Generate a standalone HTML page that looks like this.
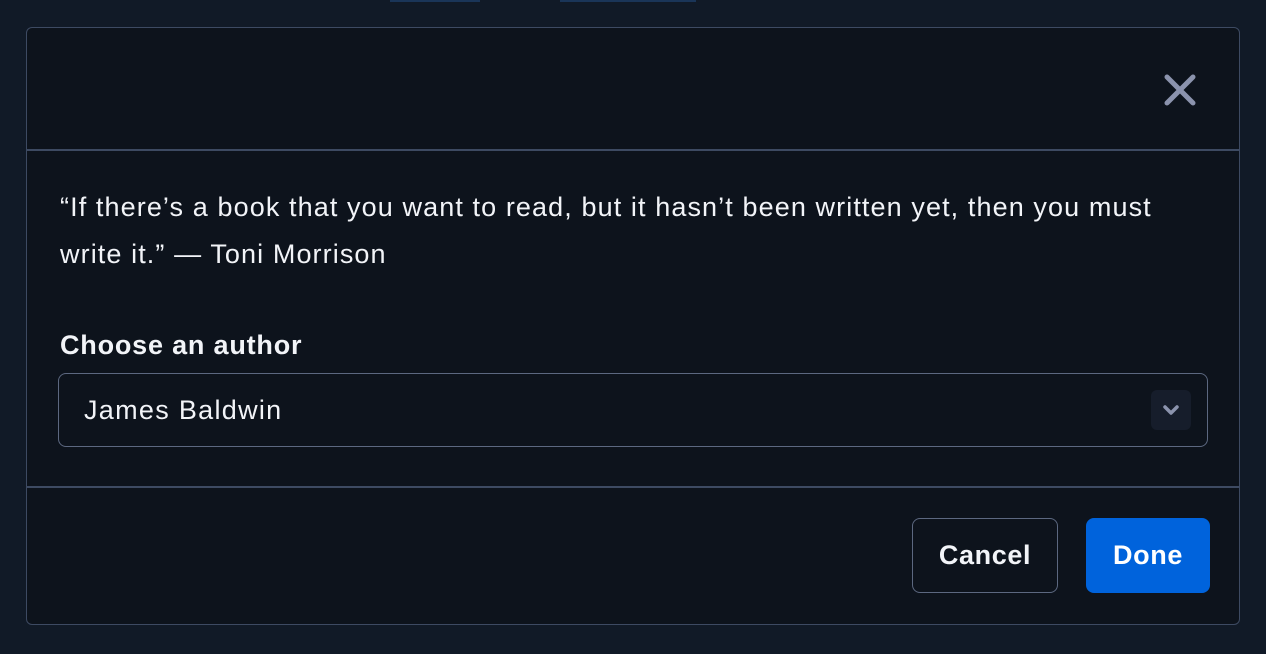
<!DOCTYPE html>
<html><head><style>
html,body{margin:0;padding:0;width:1266px;height:654px;overflow:hidden;background:#111a27;font-family:"Liberation Sans",sans-serif;color:#f2f4f8}
.dlg{position:absolute;left:26px;top:27px;width:1212px;height:596px;border:1px solid #3d4a62;border-radius:6px;background:#0d131c}
.hdr{position:absolute;left:0;right:0;top:0;height:121px;border-bottom:2px solid #3d4a62}
.x{position:absolute;left:1136px;top:45px}
.q{position:absolute;left:33px;top:156px;width:1180px;white-space:nowrap;font-size:27px;line-height:47px;letter-spacing:1.1px}
.lbl{position:absolute;left:33px;top:302px;font-size:27px;font-weight:bold;letter-spacing:0.8px}
.sel{position:absolute;left:31px;top:345px;width:1148px;height:72px;border:1.5px solid #5c6880;border-radius:8px}
.sel span{position:absolute;left:25px;top:21px;font-size:27px;letter-spacing:1.3px}
.chev{position:absolute;left:1092px;top:16px;width:40px;height:40px;border-radius:6px;background:#161d2b}
.ftr{position:absolute;left:0;right:0;top:458px;border-top:2px solid #3d4a62}
.btn{position:absolute;top:490px;height:75px;border-radius:8px;font-size:27px;font-weight:bold;display:flex;align-items:center;justify-content:center;box-sizing:border-box;letter-spacing:0.6px}
.c{left:885px;width:146px;border:1.5px solid #5c6880}
.d{left:1059px;width:124px;background:#0063dc;color:#fff}
</style></head><body>
<div style="position:absolute;left:390px;top:0;width:90px;height:2px;background:#1a3558"></div>
<div style="position:absolute;left:560px;top:0;width:136px;height:2px;background:#1a3558"></div>
<div class="dlg">
<div class="hdr">
<svg class="x" width="36" height="36" viewBox="0 0 36 36"><path d="M4 4L30 30M30 4L4 30" stroke="#8b93ad" stroke-width="5" stroke-linecap="round"/></svg>
</div>
<div class="q">“If there’s a book that you want to read, but it hasn’t been written yet, then you must<br>write it.” — Toni Morrison</div>
<div class="lbl">Choose an author</div>
<div class="sel"><span>James Baldwin</span>
<div class="chev"><svg width="40" height="40" viewBox="0 0 40 40"><path d="M14 17L20 23L26 17" stroke="#8b93ad" stroke-width="3.5" fill="none" stroke-linecap="round" stroke-linejoin="round"/></svg></div></div>
<div class="ftr"></div>
<div class="btn c">Cancel</div>
<div class="btn d">Done</div>
</div>
</body></html>
